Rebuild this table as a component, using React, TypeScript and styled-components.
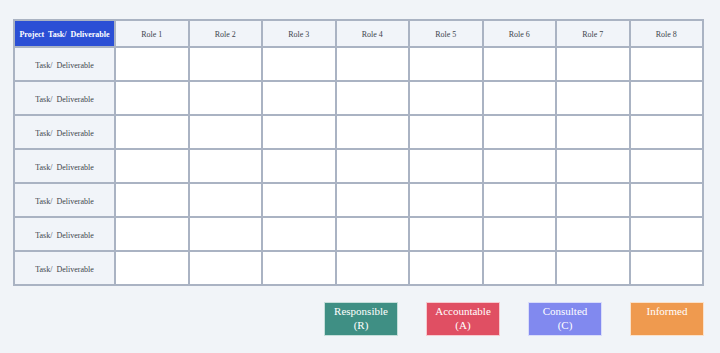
import { Fragment } from "react";
import styled, { createGlobalStyle } from "styled-components";

const GlobalStyle = createGlobalStyle`
  html, body {
    margin: 0;
    padding: 0;
    background: #f1f4f8;
  }
  body {
    font-family: "Liberation Serif", "Noto Sans CJK SC", serif;
    color: #3a3f4a;
  }
`;

const Page = styled.div`
  padding: 19px 16px 0 13px;
  width: 691px;
`;

const Matrix = styled.div`
  display: grid;
  grid-template-columns: 99px repeat(8, 1fr);
  grid-template-rows: 25px repeat(7, 32px);
  gap: 2px;
  padding: 2px;
  background: #aab3c3;
`;

const Cell = styled.div<{ $tone?: "head" | "side" | "corner" }>`
  display: flex;
  align-items: center;
  justify-content: center;
  font-size: 8px;
  white-space: pre;
  background: ${(p) =>
    p.$tone === "corner"
      ? "#2b4fd5"
      : p.$tone === "head" || p.$tone === "side"
      ? "#f1f4f9"
      : "#ffffff"};
  color: ${(p) => (p.$tone === "corner" ? "#ffffff" : "#40444d")};
  font-weight: ${(p) => (p.$tone === "corner" ? 700 : 400)};
  padding-top: ${(p) => (p.$tone === "side" ? "3px" : "2px")};
  box-sizing: border-box;
`;

const Legend = styled.div`
  display: flex;
  justify-content: flex-end;
  gap: 28px;
  margin-top: 16px;
`;

const Badge = styled.div<{ $color: string }>`
  width: 74px;
  height: 34px;
  box-sizing: border-box;
  border: 1px solid rgba(255, 255, 255, 0.7);
  background: ${(p) => p.$color};
  color: #ffffff;
  font-size: 11px;
  line-height: 14px;
  text-align: center;
  padding-top: 1px;
  white-space: pre;
`;

const roles = Array.from({ length: 8 }, (_, i) => `Role ${i + 1}`);
const rows = 7;

const legend = [
  { label: "Responsible\n(R)", color: "#3f8f84" },
  { label: "Accountable\n(A)", color: "#e04f63" },
  { label: "Consulted\n(C)", color: "#8189ef" },
  { label: "Informed\n\n(I)", color: "#ef9a4f" },
];

export default function App() {
  return (
    <>
      <GlobalStyle />
      <Page>
        <Matrix>
          <Cell $tone="corner">{"Project  Task/  Deliverable"}</Cell>
          {roles.map((r) => (
            <Cell key={r} $tone="head">
              {r}
            </Cell>
          ))}
          {Array.from({ length: rows }).map((_, i) => (
            <Fragment key={i}>
              <Cell $tone="side">{"Task/  Deliverable"}</Cell>
              {roles.map((r) => (
                <Cell key={r} />
              ))}
            </Fragment>
          ))}
        </Matrix>
        <Legend>
          {legend.map((l) => (
            <Badge key={l.label} $color={l.color}>
              {l.label}
            </Badge>
          ))}
        </Legend>
      </Page>
    </>
  );
}
